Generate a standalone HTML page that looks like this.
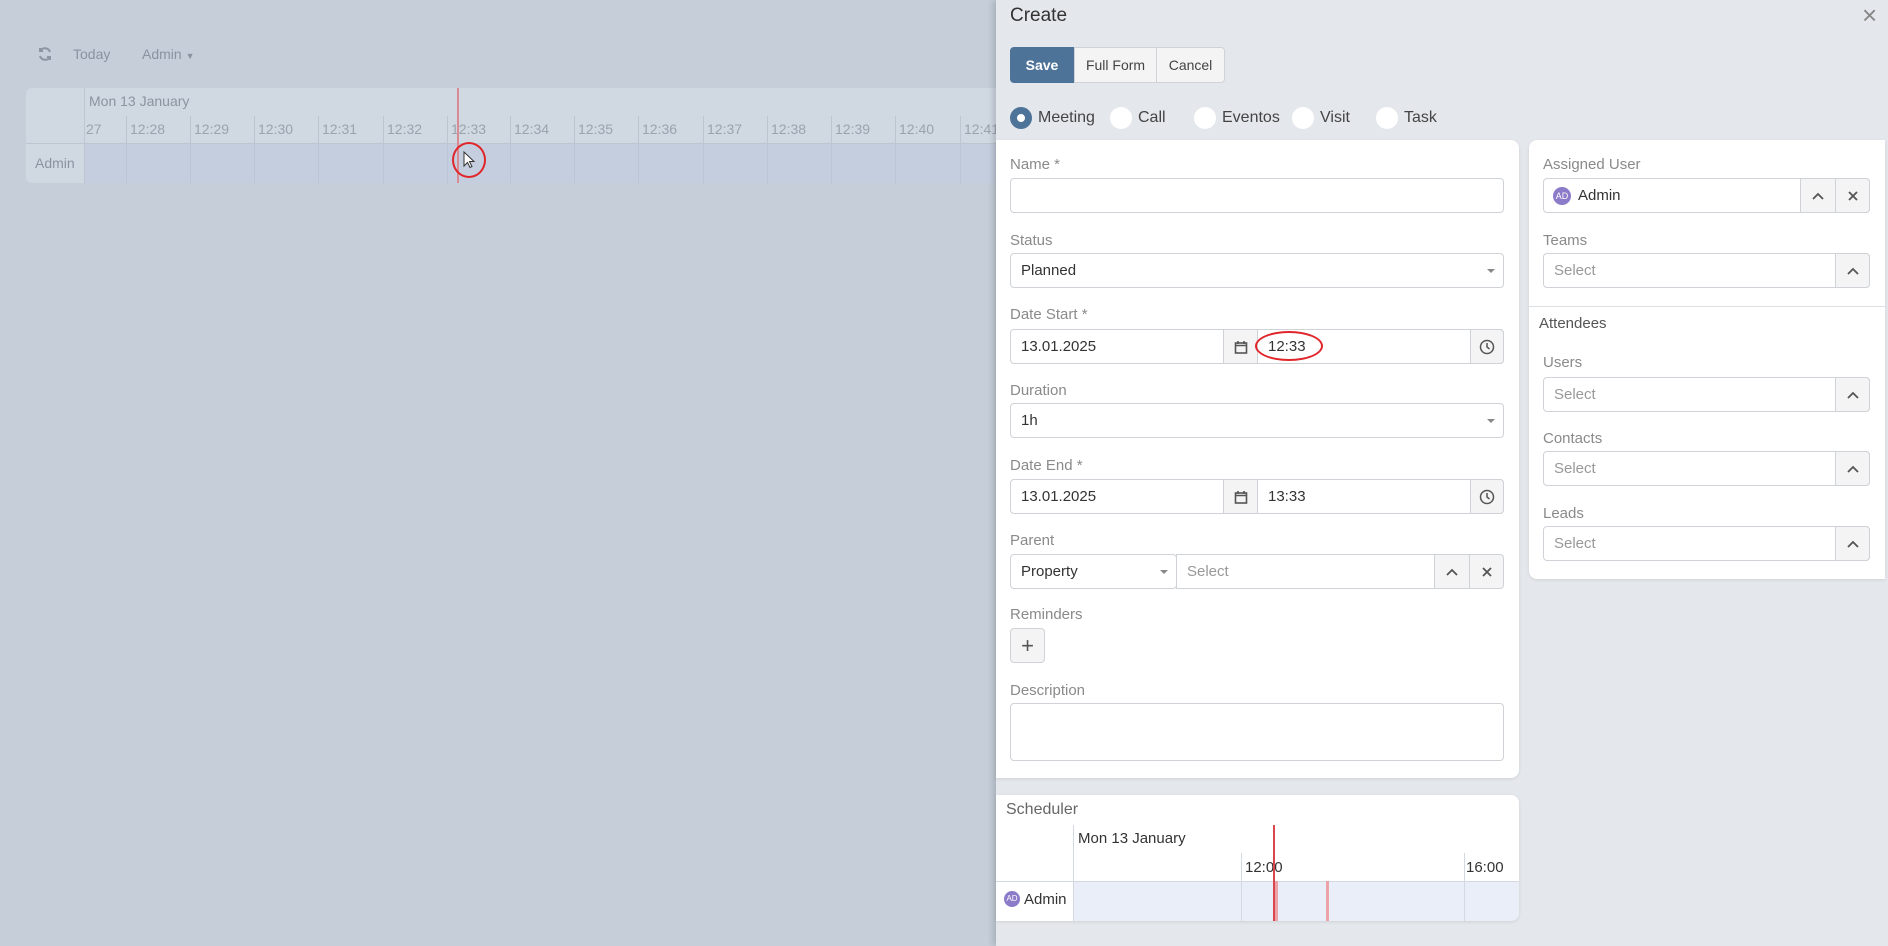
<!DOCTYPE html>
<html><head><meta charset="utf-8"><style>
*{box-sizing:border-box;margin:0;padding:0}
body{width:1888px;height:946px;overflow:hidden;background:#c5ced9;font-family:"Liberation Sans",sans-serif;position:relative;color:#333}
.a{position:absolute}
.lbl{position:absolute;font-size:15px;color:#8a8a8a}
.inp{position:absolute;background:#fff;border:1px solid #cfd2d6;border-radius:4px;height:35px;font-size:15px;line-height:33px;padding-left:10px;color:#333}
.btn{position:absolute;background:#f4f4f4;border:1px solid #cfd2d6;height:35px;display:flex;align-items:center;justify-content:center;color:#555}
.ph{color:#999}
.caret{position:absolute;right:8px;top:15px;width:0;height:0;border-left:4px solid transparent;border-right:4px solid transparent;border-top:4px solid #888}
.radio{position:absolute;width:22px;height:22px;border-radius:50%;background:#fff;top:107px}
.rl{position:absolute;top:109px;font-size:16px;color:#444}
.t{position:absolute;top:121px;font-size:14px;color:#9aa3ae}
.tk{position:absolute;top:116px;width:1px;height:67px;background:#bcc5d1}
</style></head><body>
<svg class="a" style="left:37px;top:46px" width="16" height="16" viewBox="0 0 16 16"><path d="M13 6A5.5 5.5 0 0 0 3 5M3 2v3h3M3 10a5.5 5.5 0 0 0 10 1M13 14v-3h-3" fill="none" stroke="#8c96a3" stroke-width="2"/></svg>
<div class="a" style="left:73px;top:46px;font-size:14px;color:#8a94a1">Today</div>
<div class="a" style="left:142px;top:46px;font-size:14px;color:#8a94a1">Admin <span style="font-size:9px">▼</span></div>
<div class="a" style="left:26px;top:88px;width:975px;height:95px;background:#d0d8e2;border-radius:6px"></div>
<div class="a" style="left:84px;top:144px;width:920px;height:39px;background:#c5cede"></div>
<div class="a" style="left:84px;top:88px;width:1px;height:95px;background:#bcc5d1"></div>
<div class="a" style="left:26px;top:143px;width:975px;height:1px;background:#bcc5d1"></div>
<div class="a" style="left:89px;top:93px;font-size:14px;color:#8a94a1">Mon 13 January</div>
<div class="a" style="left:35px;top:155px;font-size:14px;color:#8a94a1">Admin</div>
<div class="t" style="left:86px">27</div>
<div class="tk" style="left:126px"></div><div class="t" style="left:130px">12:28</div>
<div class="tk" style="left:190px"></div><div class="t" style="left:194px">12:29</div>
<div class="tk" style="left:254px"></div><div class="t" style="left:258px">12:30</div>
<div class="tk" style="left:318px"></div><div class="t" style="left:322px">12:31</div>
<div class="tk" style="left:383px"></div><div class="t" style="left:387px">12:32</div>
<div class="tk" style="left:447px"></div><div class="t" style="left:451px">12:33</div>
<div class="tk" style="left:510px"></div><div class="t" style="left:514px">12:34</div>
<div class="tk" style="left:574px"></div><div class="t" style="left:578px">12:35</div>
<div class="tk" style="left:638px"></div><div class="t" style="left:642px">12:36</div>
<div class="tk" style="left:703px"></div><div class="t" style="left:707px">12:37</div>
<div class="tk" style="left:767px"></div><div class="t" style="left:771px">12:38</div>
<div class="tk" style="left:831px"></div><div class="t" style="left:835px">12:39</div>
<div class="tk" style="left:895px"></div><div class="t" style="left:899px">12:40</div>
<div class="tk" style="left:960px"></div><div class="t" style="left:964px">12:41</div>
<div class="a" style="left:457px;top:88px;width:2px;height:95px;background:#d98a92"></div>
<div class="a" style="left:452px;top:142px;width:34px;height:36px;border:2px solid #e0262a;border-radius:50%"></div>
<svg class="a" style="left:463px;top:151px" width="12" height="18" viewBox="0 0 12 18"><path d="M1 1v14l3.5-3.5 2.5 5 2-1-2.5-5H11z" fill="#fff" stroke="#333"/></svg>

<div class="a" style="left:996px;top:0;width:892px;height:946px;background:#e4e8ec;box-shadow:-3px 0 6px rgba(0,0,0,.15)"></div>
<div class="a" style="left:1010px;top:5px;font-size:19px;color:#333">Create</div>
<div class="a" style="left:1862px;top:0;font-size:26px;color:#888">×</div>
<div class="a" style="left:1010px;top:47px;width:64px;height:36px;background:#4e7399;border-radius:4px 0 0 4px;color:#fff;font-weight:bold;font-size:14px;display:flex;align-items:center;justify-content:center">Save</div>
<div class="btn" style="left:1074px;top:47px;width:83px;height:36px;font-size:14px;color:#444">Full Form</div>
<div class="btn" style="left:1156px;top:47px;width:69px;height:36px;font-size:14px;color:#444;border-radius:0 4px 4px 0">Cancel</div>
<div class="radio" style="left:1010px;border:7px solid #4e7399"></div><div class="rl" style="left:1038px">Meeting</div>
<div class="radio" style="left:1110px"></div><div class="rl" style="left:1138px">Call</div>
<div class="radio" style="left:1194px"></div><div class="rl" style="left:1222px">Eventos</div>
<div class="radio" style="left:1292px"></div><div class="rl" style="left:1320px">Visit</div>
<div class="radio" style="left:1376px"></div><div class="rl" style="left:1404px">Task</div>

<div class="a" style="left:996px;top:140px;width:523px;height:638px;background:#fff;border-radius:0 8px 8px 0;box-shadow:0 1px 3px rgba(0,0,0,.1)"></div>
<div class="lbl" style="left:1010px;top:156px">Name *</div>
<div class="inp" style="left:1010px;top:178px;width:494px"></div>
<div class="lbl" style="left:1010px;top:232px">Status</div>
<div class="inp" style="left:1010px;top:253px;width:494px">Planned<div class="caret"></div></div>
<div class="lbl" style="left:1010px;top:306px">Date Start *</div>
<div class="inp" style="left:1010px;top:329px;width:494px">13.01.2025</div>
<div class="btn" style="left:1223px;top:329px;width:35px">
<svg width="14" height="14" viewBox="0 0 14 14"><rect x="1.5" y="3" width="11" height="10" fill="none" stroke="#555" stroke-width="1.6"/><path d="M1.5 5.5h11M4 1v3M10 1v3" stroke="#555" stroke-width="1.6"/></svg></div>
<div class="a" style="left:1268px;top:338px;font-size:15px;color:#333">12:33</div>
<div class="a" style="left:1255px;top:331px;width:68px;height:30px;border:2px solid #e0262a;border-radius:50%"></div>
<div class="btn" style="left:1470px;top:329px;width:34px;border-radius:0 4px 4px 0">
<svg width="16" height="16" viewBox="0 0 16 16"><circle cx="8" cy="8" r="6.5" fill="none" stroke="#555" stroke-width="1.5"/><path d="M8 4v4l2.5 2" fill="none" stroke="#555" stroke-width="1.5"/></svg></div>
<div class="lbl" style="left:1010px;top:382px">Duration</div>
<div class="inp" style="left:1010px;top:403px;width:494px">1h<div class="caret"></div></div>
<div class="lbl" style="left:1010px;top:457px">Date End *</div>
<div class="inp" style="left:1010px;top:479px;width:494px">13.01.2025</div>
<div class="btn" style="left:1223px;top:479px;width:35px">
<svg width="14" height="14" viewBox="0 0 14 14"><rect x="1.5" y="3" width="11" height="10" fill="none" stroke="#555" stroke-width="1.6"/><path d="M1.5 5.5h11M4 1v3M10 1v3" stroke="#555" stroke-width="1.6"/></svg></div>
<div class="a" style="left:1268px;top:488px;font-size:15px;color:#333">13:33</div>
<div class="btn" style="left:1470px;top:479px;width:34px;border-radius:0 4px 4px 0">
<svg width="16" height="16" viewBox="0 0 16 16"><circle cx="8" cy="8" r="6.5" fill="none" stroke="#555" stroke-width="1.5"/><path d="M8 4v4l2.5 2" fill="none" stroke="#555" stroke-width="1.5"/></svg></div>
<div class="lbl" style="left:1010px;top:532px">Parent</div>
<div class="inp" style="left:1010px;top:554px;width:167px">Property<div class="caret"></div></div>
<div class="inp ph" style="left:1176px;top:554px;width:260px;border-radius:0">Select</div>
<div class="btn" style="left:1434px;top:554px;width:36px"><svg width="12" height="8"><path d="M1 7l5-5 5 5" fill="none" stroke="#555" stroke-width="1.8"/></svg></div>
<div class="btn" style="left:1469px;top:554px;width:35px;border-radius:0 4px 4px 0"><svg width="10" height="10"><path d="M1 1l8 8M9 1l-8 8" stroke="#555" stroke-width="1.8"/></svg></div>
<div class="lbl" style="left:1010px;top:606px">Reminders</div>
<div class="btn" style="left:1010px;top:628px;width:35px;border-radius:4px;font-size:22px;font-weight:300">+</div>
<div class="lbl" style="left:1010px;top:682px">Description</div>
<div class="inp" style="left:1010px;top:703px;width:494px;height:58px"></div>

<div class="a" style="left:1529px;top:140px;width:356px;height:439px;background:#fff;border-radius:8px 0 0 8px;box-shadow:0 1px 3px rgba(0,0,0,.1)"></div>
<div class="lbl" style="left:1543px;top:156px">Assigned User</div>
<div class="inp" style="left:1543px;top:178px;width:327px;padding-left:34px">Admin</div>
<div class="a" style="left:1553px;top:187px;width:18px;height:18px;border-radius:50%;background:#8b7bc8;color:#fff;font-size:9px;line-height:18px;text-align:center">AD</div>
<div class="btn" style="left:1800px;top:178px;width:36px"><svg width="12" height="8"><path d="M1 7l5-5 5 5" fill="none" stroke="#555" stroke-width="1.8"/></svg></div>
<div class="btn" style="left:1835px;top:178px;width:35px;border-radius:0 4px 4px 0"><svg width="10" height="10"><path d="M1 1l8 8M9 1l-8 8" stroke="#555" stroke-width="1.8"/></svg></div>
<div class="lbl" style="left:1543px;top:232px">Teams</div>
<div class="inp ph" style="left:1543px;top:253px;width:327px">Select</div>
<div class="btn" style="left:1835px;top:253px;width:35px;border-radius:0 4px 4px 0"><svg width="12" height="8"><path d="M1 7l5-5 5 5" fill="none" stroke="#555" stroke-width="1.8"/></svg></div>
<div class="a" style="left:1529px;top:306px;width:356px;height:1px;background:#dde0e3"></div>
<div class="a" style="left:1539px;top:315px;font-size:15px;color:#555">Attendees</div>
<div class="lbl" style="left:1543px;top:354px">Users</div>
<div class="inp ph" style="left:1543px;top:377px;width:327px">Select</div>
<div class="btn" style="left:1835px;top:377px;width:35px;border-radius:0 4px 4px 0"><svg width="12" height="8"><path d="M1 7l5-5 5 5" fill="none" stroke="#555" stroke-width="1.8"/></svg></div>
<div class="lbl" style="left:1543px;top:430px">Contacts</div>
<div class="inp ph" style="left:1543px;top:451px;width:327px">Select</div>
<div class="btn" style="left:1835px;top:451px;width:35px;border-radius:0 4px 4px 0"><svg width="12" height="8"><path d="M1 7l5-5 5 5" fill="none" stroke="#555" stroke-width="1.8"/></svg></div>
<div class="lbl" style="left:1543px;top:505px">Leads</div>
<div class="inp ph" style="left:1543px;top:526px;width:327px">Select</div>
<div class="btn" style="left:1835px;top:526px;width:35px;border-radius:0 4px 4px 0"><svg width="12" height="8"><path d="M1 7l5-5 5 5" fill="none" stroke="#555" stroke-width="1.8"/></svg></div>

<div class="a" style="left:996px;top:795px;width:523px;height:126px;background:#fff;border-radius:0 8px 8px 0;box-shadow:0 1px 3px rgba(0,0,0,.1);overflow:hidden">
 <div class="a" style="left:10px;top:6px;font-size:16px;color:#666">Scheduler</div>
 <div class="a" style="left:77px;top:86px;width:446px;height:40px;background:#eaeef9"></div>
 <div class="a" style="left:0;top:86px;width:523px;height:1px;background:#d4d8e0"></div>
 <div class="a" style="left:77px;top:30px;width:1px;height:96px;background:#d4d8e0"></div>
 <div class="a" style="left:245px;top:58px;width:1px;height:68px;background:#d4d8e0"></div>
 <div class="a" style="left:468px;top:58px;width:1px;height:68px;background:#d4d8e0"></div>
 <div class="a" style="left:82px;top:35px;font-size:15px;color:#333">Mon 13 January</div>
 <div class="a" style="left:249px;top:64px;font-size:15px;color:#333">12:00</div>
 <div class="a" style="left:470px;top:64px;font-size:15px;color:#333">16:00</div>
 <div class="a" style="left:277px;top:30px;width:2px;height:96px;background:#d9464e"></div>
 <div class="a" style="left:279px;top:86px;width:3px;height:40px;background:#eba3a8"></div>
 <div class="a" style="left:330px;top:86px;width:3px;height:40px;background:#eba3a8"></div>
 <div class="a" style="left:8px;top:96px;width:16px;height:16px;border-radius:50%;background:#8b7bc8;color:#fff;font-size:8px;line-height:16px;text-align:center">AD</div>
 <div class="a" style="left:28px;top:96px;font-size:15px;color:#333">Admin</div>
</div>
</body></html>
